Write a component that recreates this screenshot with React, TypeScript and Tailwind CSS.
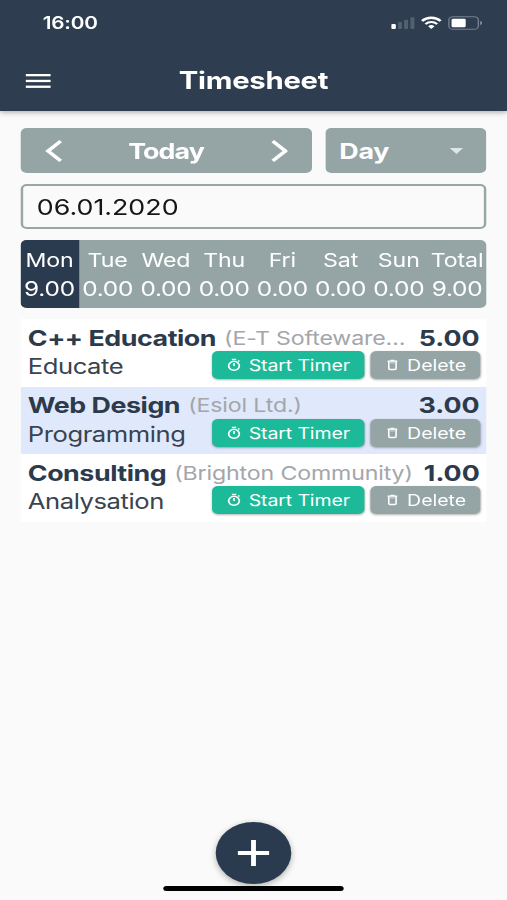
import React from "react";

const days = [
  ["Mon", "9.00"],
  ["Tue", "0.00"],
  ["Wed", "0.00"],
  ["Thu", "0.00"],
  ["Fri", "0.00"],
  ["Sat", "0.00"],
  ["Sun", "0.00"],
  ["Total", "9.00"],
];

const entries = [
  { name: "C++ Education", client: "(E-T Softeware", truncated: true, task: "Educate", hours: "5.00" },
  { name: "Web Design", client: "(Esiol Ltd.)", truncated: false, task: "Programming", hours: "3.00" },
  { name: "Consulting", client: "(Brighton Community)", truncated: false, task: "Analysation", hours: "1.00" },
];

function StatusIcons() {
  return (
    <svg width="76" height="16" viewBox="0 0 76 16" fill="none">
      <rect x="0" y="9" width="3.8" height="5" rx="1" fill="#fff" />
      <rect x="5.6" y="7" width="3.2" height="7" rx="1" fill="#52616f" />
      <rect x="10.6" y="4.8" width="3.2" height="9.2" rx="1" fill="#52616f" />
      <rect x="15.8" y="2.2" width="3.2" height="11.8" rx="1" fill="#52616f" />
      <path d="M25.3 6a10.5 10.5 0 0 1 15.2 0" stroke="#fff" strokeWidth="2.3" />
      <path d="M28.1 9.1a6.7 6.7 0 0 1 9.6 0" stroke="#fff" strokeWidth="2" />
      <path d="M32.9 14l-2.6-2.7a3.8 3.8 0 0 1 5.2 0z" fill="#fff" />
      <rect x="47.3" y="1.7" width="24.2" height="12.6" rx="3.4" stroke="#748190" strokeWidth="1.1" />
      <rect x="49.5" y="3.8" width="11.6" height="8.4" rx="1.2" fill="#fff" />
      <path d="M73 6c2 .6 2 3.4 0 4z" fill="#8994a1" />
    </svg>
  );
}

function TimerIcon() {
  return (
    <svg className="shrink-0" width="12" height="14" viewBox="0 0 12 14" fill="none" stroke="#fff" strokeWidth="1.4">
      <circle cx="6" cy="7.8" r="4.4" />
      <path d="M4.2 1.5h3.6M6 5v3M9.4 3.6l1-1" />
    </svg>
  );
}

function TrashIcon() {
  return (
    <svg className="shrink-0" width="10" height="12" viewBox="0 0 10 12" fill="none" stroke="#fff" strokeWidth="1.3">
      <path d="M1 2.2h8M3.4 1.3h3.2M2 2.6v6.9c0 .7.3 1 1 1h4c.7 0 1-.3 1-1V2.6" />
      <path d="M3 3.8h4" strokeOpacity="0.5" />
    </svg>
  );
}

export default function App() {
  return (
    <div className="h-[900px] w-[507px] overflow-hidden bg-[#fafafa]">
      <div className="flex h-[900px] w-[416px] origin-top-left scale-x-[1.21875] flex-col font-['Inter','Liberation_Sans',sans-serif] text-[#2c3a4c]">
        <header className="flex h-[111px] shrink-0 flex-col bg-[#2e3e50] text-white shadow-[0_1px_5px_rgba(0,0,0,0.35)]">
          <div className="flex h-[46px] items-center justify-between pr-[19px] pl-[35px]">
            <span className="pt-[1px] text-[17px] leading-none font-semibold tracking-[-0.15px]">16:00</span>
            <StatusIcons />
          </div>
          <div className="grid h-[65px] grid-cols-[60px_1fr_60px] items-center pt-[5px]">
            <svg className="ml-[21.3px]" width="21" height="16" viewBox="0 0 21 16" fill="#fff">
              <rect y="1" width="20.5" height="2.3" />
              <rect y="6.8" width="20.5" height="2.3" />
              <rect y="12.6" width="20.5" height="2.3" />
            </svg>
            <h1 className="text-center text-[24px] leading-none font-bold tracking-[-0.2px]">Timesheet</h1>
          </div>
        </header>

        <main className="flex flex-1 flex-col pt-[17px] pr-[16.6px] pl-[17.2px]">
          <div className="flex h-[45px] gap-[11px] text-[22px] font-bold text-white">
            <div className="flex w-[239.2px] items-center justify-between rounded-[5px] bg-[#95a5a5] px-[20px]">
              <svg width="14" height="24" viewBox="0 0 14 24" fill="none" stroke="#fff" strokeWidth="3.2">
                <path d="M12.8 2.2L2.4 12l10.4 9.8" />
              </svg>
              <span className="-ml-[1px] pt-[1px] tracking-[-0.75px]">Today</span>
              <svg width="14" height="24" viewBox="0 0 14 24" fill="none" stroke="#fff" strokeWidth="3.2">
                <path d="M1.8 2.2L12.2 12 1.8 21.8" />
              </svg>
            </div>
            <div className="flex flex-1 items-center justify-between rounded-[5px] bg-[#95a5a5] pr-[19px] pl-[11px]">
              <span className="pt-[1px] tracking-[-0.2px]">Day</span>
              <svg width="11" height="6" viewBox="0 0 11 6" fill="#dfe6e6">
                <path d="M0 0h11L5.5 6z" />
              </svg>
            </div>
          </div>

          <div className="mt-[11px] flex h-[45px] items-center rounded-[5px] border-2 border-[#98a6a6] pt-[2px] pl-[11px] text-[22px] text-[#161616]">
            06.01.2020
          </div>

          <div className="mt-[11px] grid h-[68px] grid-cols-8 overflow-hidden rounded-[5px] bg-[#95a5a5] text-[20px] text-white">
            {days.map(([day, hours], i) => (
              <div
                key={day}
                className={`flex flex-col items-center pt-[6px] pr-[1px] leading-[29px] ${i === 0 ? "bg-[#2b3b4f]" : ""}`}
              >
                <span className="text-[19px] tracking-[-0.1px]">{day}</span>
                <span className="tracking-[-0.2px]">{hours}</span>
              </div>
            ))}
          </div>

          <div className="mt-[11px] flex flex-col">
            {entries.map((e, i) => (
              <div
                key={e.name}
                className={`flex h-[67.6px] flex-col pt-[4px] pr-[5.8px] pl-[5.6px] ${i === 1 ? "bg-[#e0e8fb]" : "bg-white"}`}
              >
                <div className="flex h-[28px] items-center pt-[2px] whitespace-nowrap">
                  <span className="text-[22px] font-bold tracking-[-0.38px]">{e.name}</span>
                  <span className="ml-[6.6px] pt-[2px] text-[19px] tracking-[-0.12px] text-[#a3a6aa]">
                    {e.client}
                    {e.truncated && <span className="tracking-[-2px]">…</span>}
                  </span>
                  <span className="ml-auto text-[22px] font-bold">{e.hours}</span>
                </div>
                <div className="flex h-[28px] items-center whitespace-nowrap">
                  <span className="pt-[4px] text-[21px] tracking-[-0.35px] text-[#3a4350]">{e.task}</span>
                  <div className="ml-auto flex h-[28px] gap-[5.4px] text-[16px] text-white">
                    <div className="flex w-[124.6px] items-center gap-[6px] rounded-[5px] bg-[#1cba98] pl-[12px] shadow-[0_1px_2px_rgba(0,0,0,0.3)]">
                      <TimerIcon />
                      <span className="tracking-[-0.1px]">Start Timer</span>
                    </div>
                    <div className="flex w-[89.6px] items-center gap-[7px] rounded-[5px] bg-[#95a5a5] pl-[13px] shadow-[0_1px_2px_rgba(0,0,0,0.3)]">
                      <TrashIcon />
                      <span>Delete</span>
                    </div>
                  </div>
                </div>
              </div>
            ))}
          </div>

          <div className="mt-auto flex flex-col items-center pr-[0.8px] pb-[9px]">
            <div className="flex size-[62px] items-center justify-center rounded-full bg-[#2b3b4f] shadow-[0_2px_6px_rgba(0,0,0,0.3)]">
              <svg width="26" height="26" viewBox="0 0 26 26" stroke="#fff" strokeWidth="4">
                <path d="M13 0v26M0 13h26" />
              </svg>
            </div>
            <div className="mt-[2px] h-[5px] w-[148px] rounded-full bg-black" />
          </div>
        </main>
      </div>
    </div>
  );
}
